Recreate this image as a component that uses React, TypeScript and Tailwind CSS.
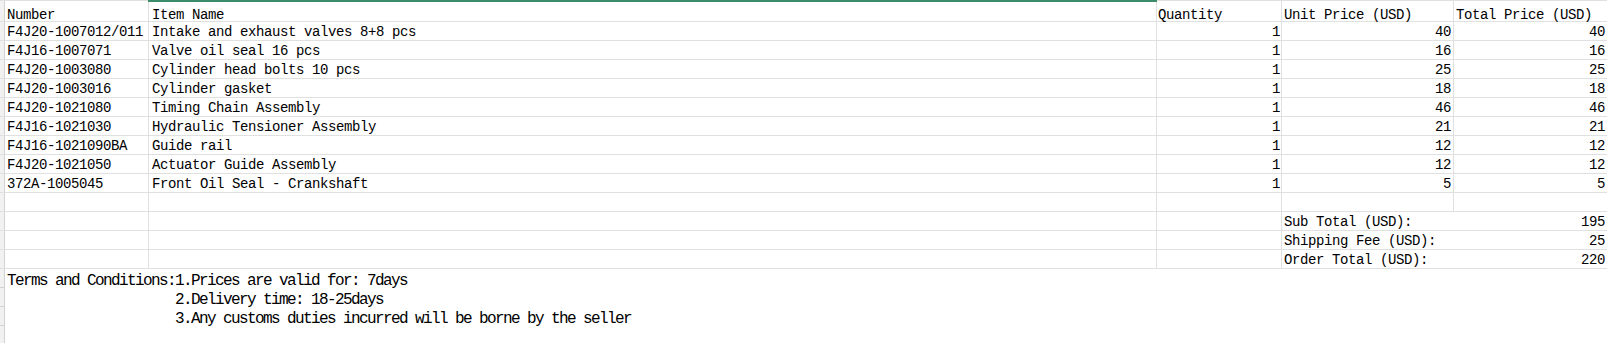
import React from "react";

const rows: [string, string, number, number, number][] = [
  ["F4J20-1007012/011", "Intake and exhaust valves 8+8 pcs", 1, 40, 40],
  ["F4J16-1007071", "Valve oil seal 16 pcs", 1, 16, 16],
  ["F4J20-1003080", "Cylinder head bolts 10 pcs", 1, 25, 25],
  ["F4J20-1003016", "Cylinder gasket", 1, 18, 18],
  ["F4J20-1021080", "Timing Chain Assembly", 1, 46, 46],
  ["F4J16-1021030", "Hydraulic Tensioner Assembly", 1, 21, 21],
  ["F4J16-1021090BA", "Guide rail", 1, 12, 12],
  ["F4J20-1021050", "Actuator Guide Assembly", 1, 12, 12],
  ["372A-1005045", "Front Oil Seal - Crankshaft", 1, 5, 5],
];

const totals: [string, number][] = [
  ["Sub Total (USD):", 195],
  ["Shipping Fee (USD):", 25],
  ["Order Total (USD):", 220],
];

const txt = "pt-[2px] leading-[16px] whitespace-nowrap overflow-hidden";

function Strip() {
  return <div className="w-[5px] shrink-0 bg-[#f1f1f1] border-r border-[#d2d2d2]" />;
}

export default function App() {
  return (
    <div className="w-[1607px] h-[343px] overflow-hidden bg-white text-black font-['Liberation_Mono',monospace] text-[14px] tracking-[-0.4px]">
      {/* header */}
      <div className="flex h-[22px] border-t border-b border-[#e0e0e0]">
        <Strip />
        <div className="w-[144px] shrink-0 border-r border-[#e0e0e0] pl-[2px] pt-[6px] leading-[16px]">Number</div>
        <div className="relative w-[1008px] shrink-0 border-r border-[#e0e0e0] pl-[3px] pt-[6px] leading-[16px]">
          <span className="absolute left-[-1px] right-[-1px] top-[-1px] h-[2px] bg-[#3c8c6c]" />
          Item Name
        </div>
        <div className="w-[125px] shrink-0 border-r border-[#e0e0e0] pl-[1px] pt-[6px] leading-[16px]">Quantity</div>
        <div className="w-[172px] shrink-0 border-r border-[#e0e0e0] pl-[2px] pt-[6px] leading-[16px] whitespace-nowrap">Unit Price (USD)</div>
        <div className="flex-1 pl-[2px] pt-[6px] leading-[16px] whitespace-nowrap">Total Price (USD)</div>
      </div>

      {rows.map((r) => (
        <div key={r[0]} className="flex h-[19px] border-b border-[#e0e0e0]">
          <Strip />
          <div className={`w-[144px] shrink-0 border-r border-[#e0e0e0] pl-[2px] ${txt}`}>{r[0]}</div>
          <div className={`w-[1008px] shrink-0 border-r border-[#e0e0e0] pl-[3px] ${txt}`}>{r[1]}</div>
          <div className={`w-[125px] shrink-0 border-r border-[#e0e0e0] pr-[1px] text-right ${txt}`}>{r[2]}</div>
          <div className={`w-[172px] shrink-0 border-r border-[#e0e0e0] pr-[2px] text-right ${txt}`}>{r[3]}</div>
          <div className={`flex-1 pr-[2px] text-right ${txt}`}>{r[4]}</div>
        </div>
      ))}

      {/* empty row */}
      <div className="flex h-[19px] border-b border-[#e0e0e0]">
        <Strip />
        <div className="w-[144px] shrink-0 border-r border-[#e0e0e0]" />
        <div className="w-[1008px] shrink-0 border-r border-[#e0e0e0]" />
        <div className="w-[125px] shrink-0 border-r border-[#e0e0e0]" />
        <div className="w-[172px] shrink-0 border-r border-[#e0e0e0]" />
        <div className="flex-1" />
      </div>

      {totals.map((t) => (
        <div key={t[0]} className="flex h-[19px] border-b border-[#e0e0e0]">
          <Strip />
          <div className="w-[144px] shrink-0 border-r border-[#e0e0e0]" />
          <div className="w-[1008px] shrink-0 border-r border-[#e0e0e0]" />
          <div className="w-[125px] shrink-0 border-r border-[#e0e0e0]" />
          <div className={`w-[172px] shrink-0 pl-[2px] ${txt}`}>{t[0]}</div>
          <div className={`flex-1 pr-[2px] text-right ${txt}`}>{t[1]}</div>
        </div>
      ))}

      {/* terms */}
      <div className="text-[16px] tracking-[-1.6px]">
        <div className="flex h-[19px]">
          <div className="w-[5px] shrink-0 bg-[#f1f1f1] border-r border-b border-[#d2d2d2]" />
          <div className="flex pl-[2px] pt-[4px] leading-[16px] whitespace-nowrap">
            <span className="w-[168px] shrink-0">Terms and Conditions:</span>
            <span>1.Prices are valid for: 7days</span>
          </div>
        </div>
        <div className="flex h-[19px]">
          <div className="w-[5px] shrink-0 bg-[#f1f1f1] border-r border-b border-[#d2d2d2]" />
          <div className="flex pl-[2px] pt-[4px] leading-[16px] whitespace-nowrap">
            <span className="w-[168px] shrink-0" />
            <span>2.Delivery time: 18-25days</span>
          </div>
        </div>
        <div className="flex h-[19px]">
          <div className="w-[5px] shrink-0 bg-[#f1f1f1] border-r border-b border-[#d2d2d2]" />
          <div className="flex pl-[2px] pt-[4px] leading-[16px] whitespace-nowrap">
            <span className="w-[168px] shrink-0" />
            <span>3.Any customs duties incurred will be borne by the seller</span>
          </div>
        </div>
        <div className="flex h-[19px]">
          <div className="w-[5px] shrink-0 bg-[#f1f1f1] border-r border-b border-[#d2d2d2]" />
        </div>
      </div>
    </div>
  );
}
